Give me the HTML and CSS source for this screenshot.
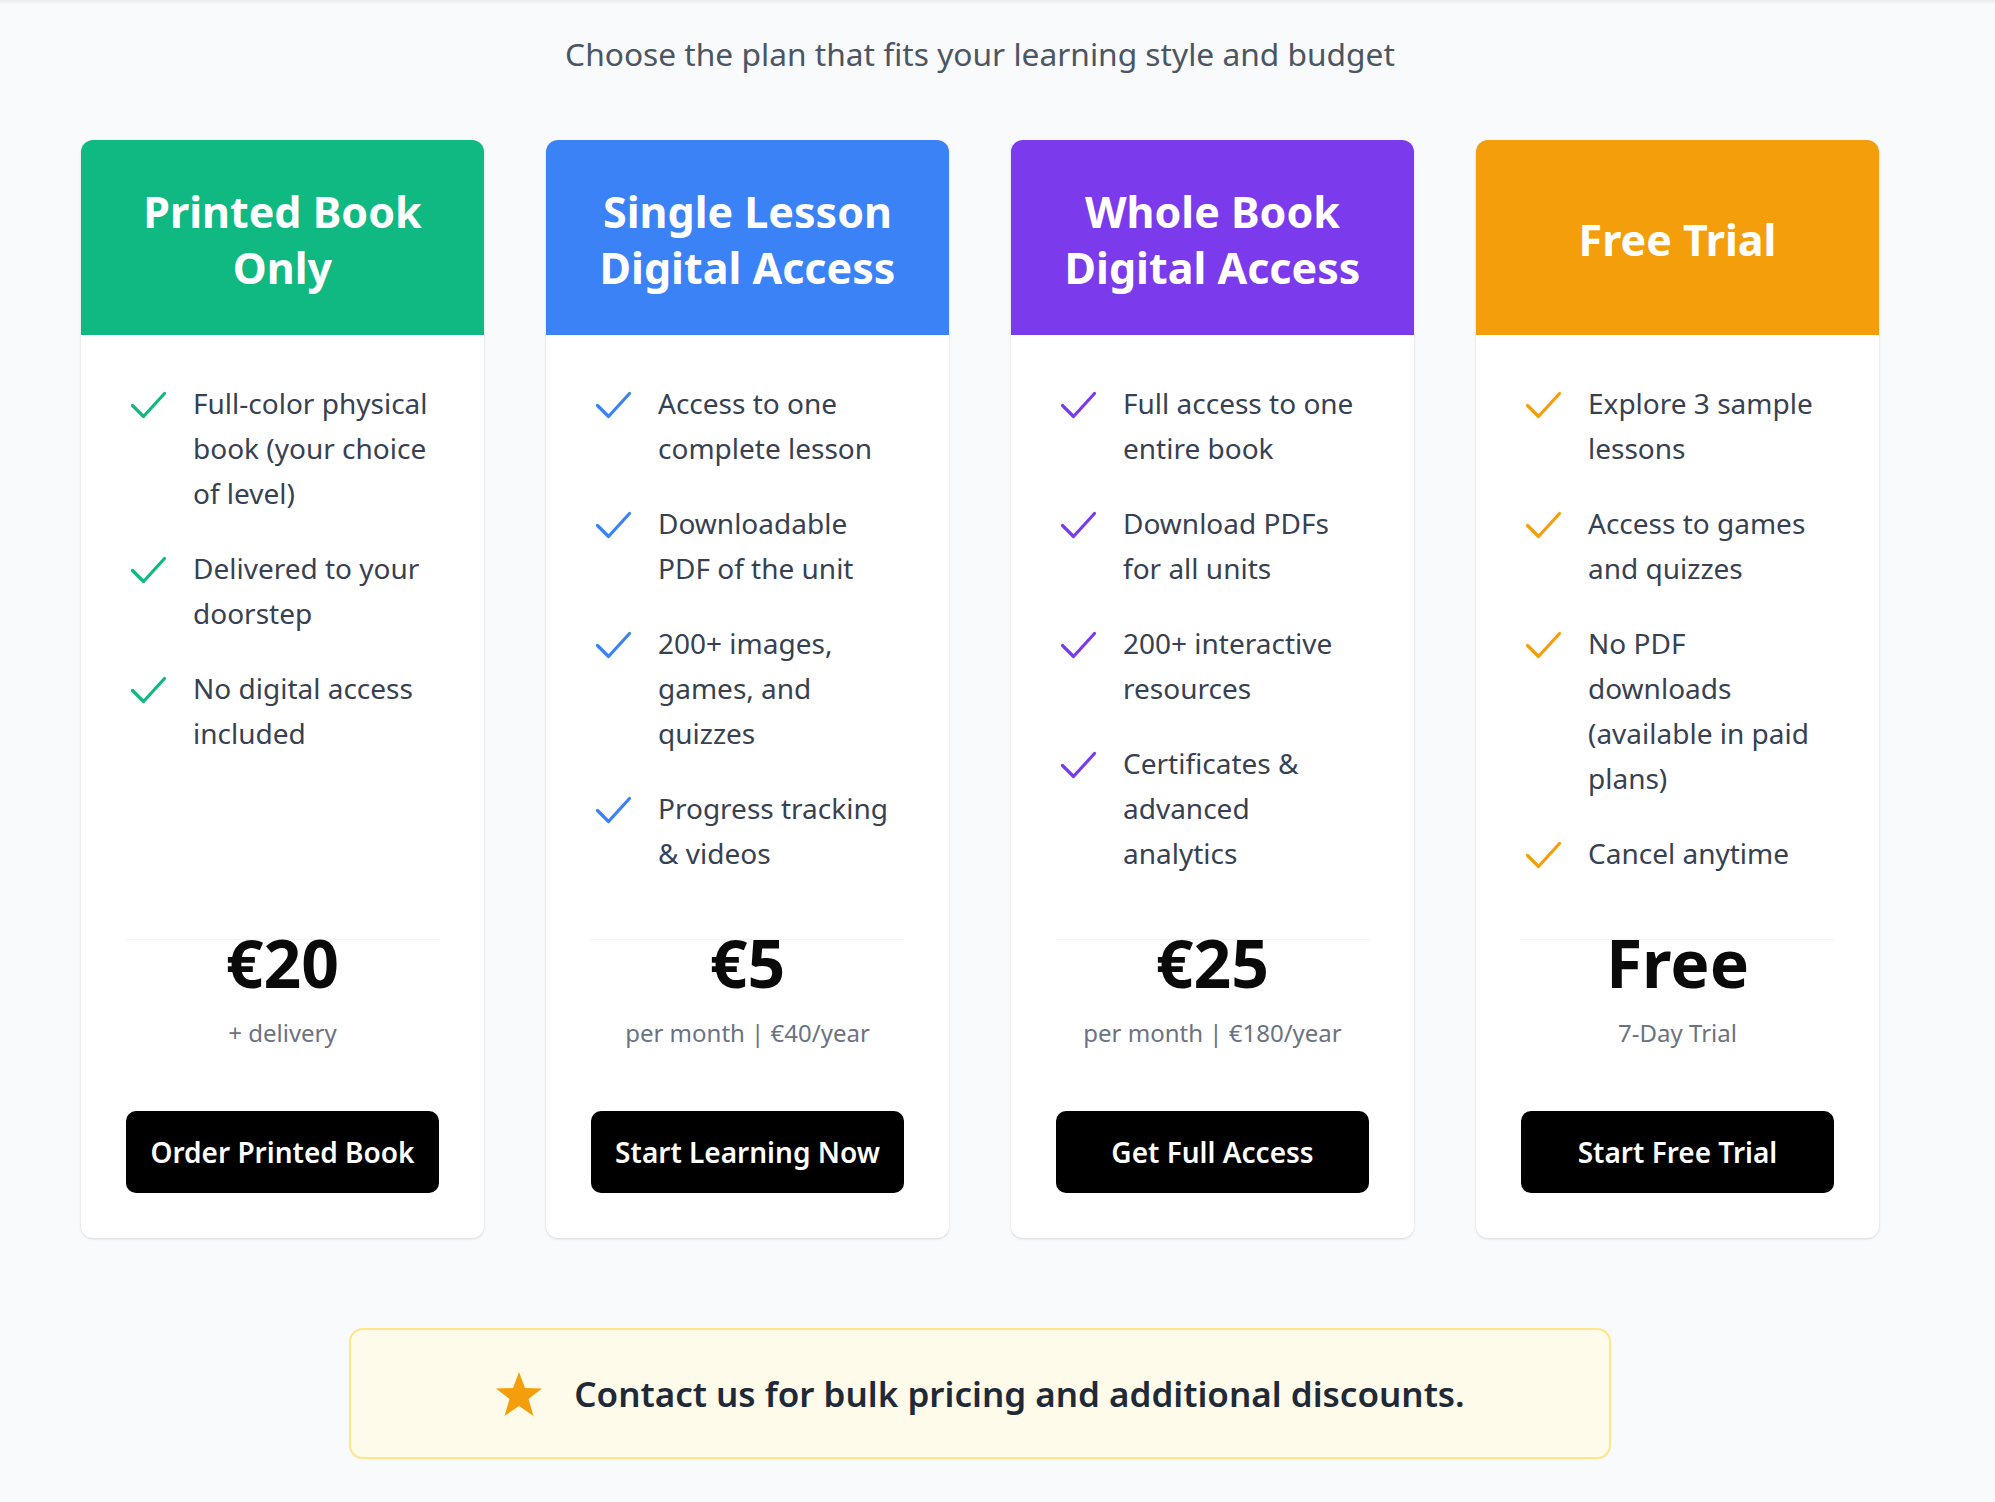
FILE: index.html
```html
<!DOCTYPE html>
<html lang="en">
<head>
<meta charset="utf-8">
<title>Pricing plans</title>
<link rel="stylesheet" href="styles.css">
</head>
<body>
<main class="page">
  <p class="subtitle">Choose the plan that fits your learning style and budget</p>

  <section class="plans">
    <article class="card card--green">
      <header class="card-head"><h2>Printed Book Only</h2></header>
      <div class="card-body">
        <ul class="features">
          <li><svg class="check" viewBox="0 0 37 28"><path d="M2.5 14.5 L13.5 25.5 L34.5 2.5"/></svg><span>Full-color physical book (your choice of level)</span></li>
          <li><svg class="check" viewBox="0 0 37 28"><path d="M2.5 14.5 L13.5 25.5 L34.5 2.5"/></svg><span>Delivered to your doorstep</span></li>
          <li><svg class="check" viewBox="0 0 37 28"><path d="M2.5 14.5 L13.5 25.5 L34.5 2.5"/></svg><span>No digital access included</span></li>
        </ul>
        <div class="price-block">
          <div class="price">€20</div>
          <div class="price-note">+ delivery</div>
          <button class="cta">Order Printed Book</button>
        </div>
      </div>
    </article>

    <article class="card card--blue">
      <header class="card-head"><h2>Single Lesson Digital Access</h2></header>
      <div class="card-body">
        <ul class="features">
          <li><svg class="check" viewBox="0 0 37 28"><path d="M2.5 14.5 L13.5 25.5 L34.5 2.5"/></svg><span>Access to one complete lesson</span></li>
          <li><svg class="check" viewBox="0 0 37 28"><path d="M2.5 14.5 L13.5 25.5 L34.5 2.5"/></svg><span>Downloadable PDF of the unit</span></li>
          <li><svg class="check" viewBox="0 0 37 28"><path d="M2.5 14.5 L13.5 25.5 L34.5 2.5"/></svg><span>200+ images, games, and quizzes</span></li>
          <li><svg class="check" viewBox="0 0 37 28"><path d="M2.5 14.5 L13.5 25.5 L34.5 2.5"/></svg><span>Progress tracking &amp; videos</span></li>
        </ul>
        <div class="price-block">
          <div class="price">€5</div>
          <div class="price-note">per month | €40/year</div>
          <button class="cta">Start Learning Now</button>
        </div>
      </div>
    </article>

    <article class="card card--purple">
      <header class="card-head"><h2>Whole Book Digital Access</h2></header>
      <div class="card-body">
        <ul class="features">
          <li><svg class="check" viewBox="0 0 37 28"><path d="M2.5 14.5 L13.5 25.5 L34.5 2.5"/></svg><span>Full access to one entire book</span></li>
          <li><svg class="check" viewBox="0 0 37 28"><path d="M2.5 14.5 L13.5 25.5 L34.5 2.5"/></svg><span>Download PDFs for all units</span></li>
          <li><svg class="check" viewBox="0 0 37 28"><path d="M2.5 14.5 L13.5 25.5 L34.5 2.5"/></svg><span>200+ interactive resources</span></li>
          <li><svg class="check" viewBox="0 0 37 28"><path d="M2.5 14.5 L13.5 25.5 L34.5 2.5"/></svg><span>Certificates &amp; advanced analytics</span></li>
        </ul>
        <div class="price-block">
          <div class="price">€25</div>
          <div class="price-note">per month | €180/year</div>
          <button class="cta">Get Full Access</button>
        </div>
      </div>
    </article>

    <article class="card card--orange">
      <header class="card-head"><h2>Free Trial</h2></header>
      <div class="card-body">
        <ul class="features">
          <li><svg class="check" viewBox="0 0 37 28"><path d="M2.5 14.5 L13.5 25.5 L34.5 2.5"/></svg><span>Explore 3 sample lessons</span></li>
          <li><svg class="check" viewBox="0 0 37 28"><path d="M2.5 14.5 L13.5 25.5 L34.5 2.5"/></svg><span>Access to games and quizzes</span></li>
          <li><svg class="check" viewBox="0 0 37 28"><path d="M2.5 14.5 L13.5 25.5 L34.5 2.5"/></svg><span>No PDF downloads (available in paid plans)</span></li>
          <li><svg class="check" viewBox="0 0 37 28"><path d="M2.5 14.5 L13.5 25.5 L34.5 2.5"/></svg><span>Cancel anytime</span></li>
        </ul>
        <div class="price-block">
          <div class="price">Free</div>
          <div class="price-note">7-Day Trial</div>
          <button class="cta">Start Free Trial</button>
        </div>
      </div>
    </article>
  </section>

  <aside class="notice">
    <svg class="star" viewBox="0 0 48 46"><polygon points="24,1 30,17 47,17.5 33.5,28 38.5,45 24,35 9.5,45 14.5,28 1,17.5 18,17"/></svg>
    <span>Contact us for bulk pricing and additional discounts.</span>
  </aside>
</main>
</body>
</html>
```

FILE: styles.css
```css
* { box-sizing: border-box; }

html, body {
  margin: 0;
  padding: 0;
}

body {
  background: linear-gradient(#e9ebee, #f8fafc 5px) #f8fafc;
  background-repeat: no-repeat;
  background-color: #f8fafc;
  font-family: "Noto Sans", "Open Sans", sans-serif;
  color: #374151;
}

.page {
  padding: 31px 116px 43px 81px;
  display: flex;
  flex-direction: column;
  align-items: center;
}

.subtitle {
  margin: 0 0 64px;
  font-size: 31.7px;
  line-height: 45px;
  color: #4b5563;
  text-align: center;
}

.plans {
  width: 100%;
  display: grid;
  grid-template-columns: repeat(4, 1fr);
  gap: 62px;
}

.card {
  background: #fff;
  border-radius: 12px;
  box-shadow: 0 1px 3px rgba(15, 23, 42, 0.10), 0 1px 2px rgba(15, 23, 42, 0.05);
  display: flex;
  flex-direction: column;
  overflow: hidden;
}

.card-head {
  height: 195px;
  padding: 5px 30px 0;
  display: flex;
  align-items: center;
  justify-content: center;
  text-align: center;
  color: #fff;
}

.card-head h2 {
  margin: 0;
  font-size: 43px;
  line-height: 56px;
  font-weight: 700;
}

.card--green .card-head { background: #10b981; }
.card--blue .card-head { background: #3b82f6; }
.card--purple .card-head { background: #7c3aed; }
.card--orange .card-head { background: #f59e0b; }

.card--green .check { stroke: #10b981; }
.card--blue .check { stroke: #3b82f6; }
.card--purple .check { stroke: #7c3aed; }
.card--orange .check { stroke: #f59e0b; }

.card-body {
  flex: 1;
  display: flex;
  flex-direction: column;
  padding: 46px 45px 45px;
}

.features {
  list-style: none;
  margin: 0 0 63px;
  padding: 0;
  flex: 1;
  display: flex;
  flex-direction: column;
  gap: 30px;
}

.features li {
  display: flex;
  align-items: flex-start;
  font-size: 28px;
  line-height: 45px;
  color: #374151;
}

.check {
  flex: none;
  width: 37px;
  height: 28px;
  margin: 10px 26px 0 4px;
  fill: none;
  stroke-width: 3.2;
  stroke-linecap: round;
  stroke-linejoin: round;
}

.price-block {
  border-top: 1px solid #f1f3f5;
  display: flex;
  flex-direction: column;
  align-items: center;
}

.price {
  margin-top: -3px;
  font-size: 66px;
  line-height: 50px;
  font-weight: 700;
  color: #0a0a0a;
}

.price-note {
  margin-top: 28px;
  font-size: 24px;
  line-height: 36px;
  color: #6b7280;
}

.cta {
  margin-top: 60px;
  width: 100%;
  height: 82px;
  border: 0;
  border-radius: 10px;
  background: #000;
  color: #fff;
  font-family: inherit;
  font-size: 28px;
  font-weight: 600;
  cursor: pointer;
}

.notice {
  margin-top: 90px;
  width: 1262px;
  height: 131px;
  border: 2px solid #fde68a;
  border-radius: 14px;
  background: #fefbea;
  display: flex;
  align-items: center;
  justify-content: center;
  gap: 31px;
  font-size: 35px;
  font-weight: 600;
  color: #1f2937;
  box-shadow: 0 1px 2px rgba(0, 0, 0, 0.04);
}

.star {
  width: 48px;
  height: 46px;
  fill: #f59e0b;
}
```
